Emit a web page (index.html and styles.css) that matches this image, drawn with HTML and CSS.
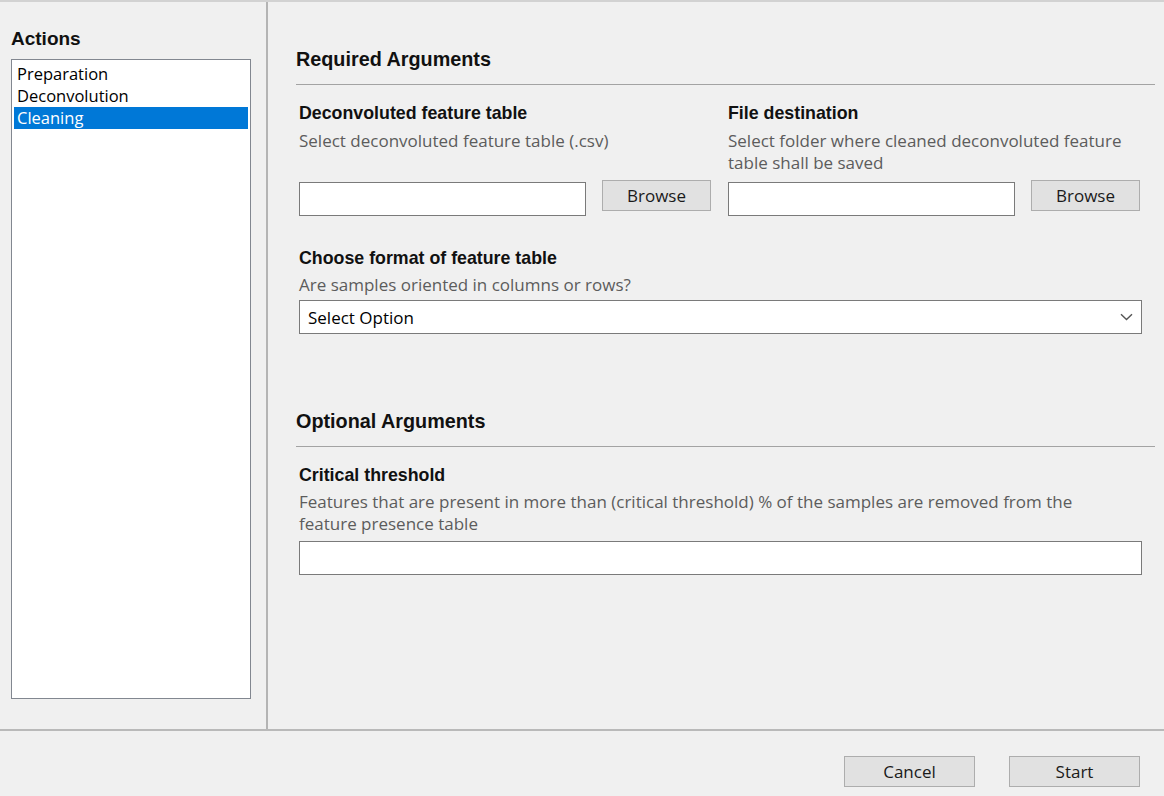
FILE: index.html
```html
<!DOCTYPE html>
<html lang="en">
<head>
<meta charset="utf-8">
<title>Cleaning</title>
<link rel="stylesheet" href="styles.css">
</head>
<body>
<div class="window">
  <div class="main">
    <aside class="sidebar">
      <div class="sidebar-title">Actions</div>
      <ul class="list">
        <li class="list-item">Preparation</li>
        <li class="list-item">Deconvolution</li>
        <li class="list-item selected">Cleaning</li>
      </ul>
    </aside>
    <div class="vsep"></div>
    <section class="content">
      <h2 class="section-title">Required Arguments</h2>
      <div class="section-rule"></div>
      <div class="two-col">
        <div class="field">
          <div class="field-label">Deconvoluted feature table</div>
          <div class="field-desc fixed">Select deconvoluted feature table (.csv)</div>
          <div class="input-row">
            <div class="text-input short"></div>
            <button class="btn browse">Browse</button>
          </div>
        </div>
        <div class="field">
          <div class="field-label">File destination</div>
          <div class="field-desc fixed">Select folder where cleaned deconvoluted feature table shall be saved</div>
          <div class="input-row">
            <div class="text-input short"></div>
            <button class="btn browse">Browse</button>
          </div>
        </div>
      </div>
      <div class="field full format">
        <div class="field-label">Choose format of feature table</div>
        <div class="field-desc tight">Are samples oriented in columns or rows?</div>
        <div class="select">
          <span>Select Option</span>
          <svg class="chevron" width="13" height="8" viewBox="0 0 13 8"><path d="M1 1.2 L6.5 6.5 L12 1.2" fill="none" stroke="#555" stroke-width="1.4"/></svg>
        </div>
      </div>
      <h2 class="section-title optional">Optional Arguments</h2>
      <div class="section-rule"></div>
      <div class="field full">
        <div class="field-label">Critical threshold</div>
        <div class="field-desc narrow">Features that are present in more than (critical threshold) % of the samples are removed from the feature presence table</div>
        <div class="text-input wide"></div>
      </div>
    </section>
  </div>
  <div class="footer">
    <button class="btn action">Cancel</button>
    <button class="btn action">Start</button>
  </div>
</div>
</body>
</html>
```

FILE: styles.css
```css
* { box-sizing: border-box; }
html, body {
  margin: 0;
  padding: 0;
  background: #f0f0f0;
}
body {
  font-family: "Open Sans", "Noto Sans", sans-serif;
  color: #000;
}
.window {
  width: 1164px;
  height: 796px;
  border-top: 2px solid #d2d2d2;
  display: flex;
  flex-direction: column;
}
.main {
  display: flex;
  height: 729px;
  flex: none;
  border-bottom: 2px solid #b9b9b9;
}
.sidebar {
  width: 266px;
  padding: 27px 0 0 11px;
}
.sidebar-title {
  font-family: "Liberation Sans", Arial, sans-serif;
  font-weight: bold;
  font-size: 19px;
  line-height: 20px;
  height: 30px;
  color: #111;
}
.list {
  list-style: none;
  margin: 0;
  width: 240px;
  height: 640px;
  background: #fff;
  border: 1px solid #828790;
  padding: 3px 2px;
}
.list-item {
  height: 22px;
  line-height: 22px;
  padding-left: 3px;
  font-size: 16.5px;
}
.list-item.selected {
  background: #0078d7;
  color: #fff;
}
.vsep {
  width: 2px;
  background: #b4b4b4;
}
.content {
  flex: 1;
  padding: 45px 9px 0 28px;
}
.section-title {
  margin: 0;
  font-family: "Liberation Sans", Arial, sans-serif;
  font-weight: bold;
  font-size: 19.8px;
  line-height: 24px;
  height: 24px;
  color: #111;
}
.section-title.optional {
  margin-top: 75px;
}
.section-rule {
  margin-top: 13px;
  height: 1px;
  background: #a3a3a3;
  margin-bottom: 17px;
}
.two-col {
  display: grid;
  grid-template-columns: 412px 412px;
  column-gap: 17px;
  padding-left: 3px;
}
.field.full {
  padding-left: 3px;
  width: 846px;
}
.field.format {
  margin-top: 31px;
}
.field-label {
  font-family: "Liberation Sans", Arial, sans-serif;
  font-weight: bold;
  font-size: 17.8px;
  line-height: 22px;
  margin-bottom: 6px;
  color: #111;
}
.field-desc {
  font-size: 17px;
  line-height: 22px;
  color: #5c5c5c;
  margin-bottom: 6px;
}
.field-desc.fixed {
  min-height: 44px;
  margin-bottom: 8px;
}
.field-desc.narrow { max-width: 800px; }
.full .field-label { margin-bottom: 5px; }
.field-desc.tight { margin-bottom: 4px; }
.input-row {
  display: flex;
  align-items: flex-start;
  gap: 16px;
}
.text-input {
  height: 34px;
  background: #fff;
  border: 1px solid #7a7a7a;
}
.text-input.short { width: 287px; }
.text-input.wide { width: 843px; }
.btn {
  font-family: "Open Sans", "Noto Sans", sans-serif;
  font-size: 17px;
  color: #1a1a1a;
  background: #e1e1e1;
  border: 1px solid #adadad;
  padding: 0;
  height: 31px;
  line-height: 29px;
}
.btn.browse {
  width: 109px;
  margin-top: -2px;
}
.select {
  width: 843px;
  height: 34px;
  background: #fff;
  border: 1px solid #7a7a7a;
  display: flex;
  align-items: center;
  justify-content: space-between;
  padding: 0 8px 0 8px;
  font-size: 17px;
}
.footer {
  flex: 1;
  display: flex;
  justify-content: flex-end;
  align-items: flex-start;
  gap: 34px;
  padding: 25px 24px 0 0;
}
.btn.action {
  width: 131px;
}
```
